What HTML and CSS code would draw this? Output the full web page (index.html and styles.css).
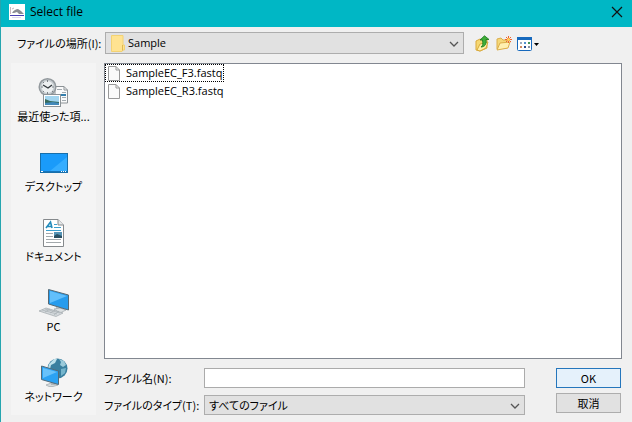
FILE: index.html
```html
<!DOCTYPE html>
<html lang="ja">
<head>
  <meta charset="utf-8">
  <title>Select file</title>
  <link rel="stylesheet" href="styles.css">
</head>
<body>
  <div class="dialog">
    <header class="titlebar">
      <svg class="app-icon" width="16" height="16" viewBox="0 0 16 16">
        <rect width="16" height="16" fill="#fff"/>
        <path d="M3 9C5 6 7 5 9 5L12 7L15 10H10L8 8L5 9Z" fill="#8b8d94"/>
        <path d="M1.500 3V10M3 5L5 4" stroke="#c9b6bd" fill="none"/>
        <path d="M1 11.500H15" stroke="#4a3fb4"/>
        <path d="M3 13.500H12" stroke="#dcdaf0"/>
      </svg>
      <h1>Select file</h1>
      <button class="close" type="button" aria-label="Close">
        <svg width="12" height="12" viewBox="0 0 12 12"><path d="M1 1L11 11M11 1L1 11" stroke="#111" stroke-width="1.200"/></svg>
      </button>
    </header>

    <form class="content">
      <div class="lookin">
        <label for="location">ファイルの場所(I):</label>
        <div class="select-box folder-box">
          <svg class="folder" width="14" height="17" viewBox="0 0 14 17">
            <path d="M0.500 0.500H12V10L13.500 10V15H12L11 16.500H0.500Z" fill="#ffe391" stroke="#f3d273"/>
            <path d="M11.500 10V15.500" stroke="#dfb951"/>
          </svg>
          <select id="location"><option>Sample</option></select>
          <svg class="arrow" width="10" height="6" viewBox="0 0 10 6"><path d="M1 1L5 5L9 1" fill="none" stroke="#555" stroke-width="1.300"/></svg>
        </div>
        <div class="tools">
          <button type="button" aria-label="Up one level">
            <svg width="16" height="17" viewBox="0 0 16 17">
              <path d="M1 6L5 4L7 5L12 4V13L5 16L1 15Z" fill="#f6d873" stroke="#d9a93c"/>
              <path d="M2 15L5 9L13 7L11 13L5 16Z" fill="#fff0a8" stroke="#d9a93c"/>
              <path d="M6 12C8 11 8 9 7.500 5H5L9.500 0.800L14 4.500H11C12 10 9 12 6 12Z" fill="#3fae3a" stroke="#187a1c" stroke-width=".8"/>
            </svg>
          </button>
          <button type="button" aria-label="New folder">
            <svg width="16" height="17" viewBox="0 0 16 17">
              <path d="M1 14V4L5 3L7 5H11V13Z" fill="#f5d879" stroke="#dcae4b"/>
              <path d="M1 15L4 8L14 7L12 13Z" fill="#fff0b0" stroke="#dcae4b"/>
              <path d="M12.500 1V8M9 4.500H16M10 2L15 7M15 2L10 7" stroke="#f0642f"/>
              <circle cx="12.500" cy="4.500" r="1.500" fill="#ffd65a"/>
            </svg>
          </button>
          <button type="button" aria-label="View menu">
            <svg width="23" height="17" viewBox="0 0 23 17">
              <rect x="0.500" y="2.500" width="14" height="13" rx="1" fill="#fff" stroke="#1769bd"/>
              <path d="M0 2H15V5H0Z" fill="#1769bd"/>
              <path d="M3 7H5V9H3Z" fill="#9babc0"/><path d="M7 7H9V9H7Z" fill="#5391d1"/><path d="M11 7H13V9H11Z" fill="#439557"/>
              <path d="M3 11H5V13H3Z" fill="#d28a62"/><path d="M7 11H9V13H7Z" fill="#294b8d"/><path d="M11 11H13V13H11Z" fill="#8d92a1"/>
              <path d="M17 8H22L19.500 11Z" fill="#000"/>
            </svg>
          </button>
        </div>
      </div>

      <nav class="places">
        <button type="button">
          <svg width="32" height="32" viewBox="0 0 32 32">
            <path d="M17 11.500H26L29.500 15V28H17Z" fill="#fafafa" stroke="#8c9296"/>
            <path d="M26 11.500V15H29.500" fill="none" stroke="#8c9296"/>
            <path d="M19 14.500H24M24 17.500H28M24 22.500H28M24 25.500H28" stroke="#a3abb0"/>
            <path d="M23 19H28V21H23Z" fill="#347fad"/>
            <circle cx="9.500" cy="12" r="8.300" fill="#c5cbcf" stroke="#93999d" stroke-width="1.500"/>
            <circle cx="9.500" cy="12" r="6" fill="#edf0f1"/>
            <path d="M9.500 5V7M9.500 17V19M3 12H5M14 12H16M5 7L6 8M14 16L15 17M5 17L6 16" stroke="#7c8388"/>
            <path d="M5 10L10 13L14 10" fill="none" stroke="#33393d" stroke-width="1.400"/>
            <rect x="5.500" y="19.500" width="17" height="12" fill="#fff" stroke="#8c9296"/>
            <path d="M7 21H21V30H7Z" fill="#a3d5ef"/>
            <path d="M7 24L12 26L21 27V29H7Z" fill="#376b5c"/>
            <path d="M7 28L15 27L21 28V30H7Z" fill="#4389ba"/>
          </svg>
          <span>最近使った項...</span>
        </button>
        <button type="button">
          <svg width="32" height="32" viewBox="0 0 32 32">
            <rect x="2.500" y="8.500" width="27" height="19" fill="#1a9bfa" stroke="#176fab"/>
            <path d="M12 26L29 12V26Z" fill="#35adff"/>
            <path d="M3 26.500H29" stroke="#1675bb"/>
            <path d="M3 26.500H5M23 26.500H24M25 26.500H26M27 26.500H28" stroke="#fff"/>
          </svg>
          <span>デスクトップ</span>
        </button>
        <button type="button">
          <svg width="32" height="32" viewBox="0 0 32 32">
            <path d="M5.500 4.500H20L25.500 10V31.500H5.500Z" fill="#fff" stroke="#85898c"/>
            <path d="M20 4.500V10H25.500" fill="#e5e8e9" stroke="#85898c"/>
            <path d="M8 13L12.500 7L14 13M9.500 11.500H14" fill="none" stroke="#238bbb" stroke-width="1.600"/>
            <path d="M16 9.500H19M16 12.500H23M8 15.500H23" stroke="#3b9fce"/>
            <path d="M8 18.500H15M8 21.500H15M8 24.500H23M8 27.500H23" stroke="#a3a9ac"/>
            <path d="M16 17H24V23H16Z" fill="#5493b5"/><path d="M16 21L19 19L24 21V23H16Z" fill="#294f62"/>
          </svg>
          <span>ドキュメント</span>
        </button>
        <button type="button">
          <svg width="32" height="32" viewBox="0 0 32 32">
            <path d="M18 22L24 23V26L18 24Z" fill="#b8bec1"/>
            <path d="M16 24L22 23L28 25L22 28Z" fill="#dce0e2" stroke="#9ea6aa" stroke-width=".7"/>
            <path d="M10.500 4.500L30.500 10V25L10.500 19Z" fill="#279ced" stroke="#576872"/>
            <path d="M12 6L29 11L12 18Z" fill="#62bffb"/>
            <path d="M1 26L8 23L25 28L18 31.500Z" fill="#d5dadd" stroke="#a1a8ac" stroke-width=".7"/>
            <path d="M4 25L19 29M7 24L22 28M7 27L12 24M12 28L17 25M16 30L21 26" stroke="#a8afb3" stroke-width=".7"/>
          </svg>
          <span>PC</span>
        </button>
        <button type="button">
          <svg width="32" height="32" viewBox="0 0 32 32">
            <circle cx="19.500" cy="13.500" r="10" fill="#397f9f"/>
            <path d="M11 9L16 4L19 4L17 8L13 10L12 14L10 13Z" fill="#bde1eb"/>
            <path d="M21 4L26 6L28 10L25 12L22 10L23 7Z" fill="#9acada"/>
            <path d="M23 14L28 13L27 18L23 21Z" fill="#75b5cc"/>
            <path d="M8 30L13 28L20 30L15 31.500H11Z" fill="#d5dadd" stroke="#9fa7ab" stroke-width=".7"/>
            <path d="M13 26L17 27V30H13Z" fill="#aeb7bc"/>
            <path d="M3.500 11L20.500 16V29.500L3.500 24.500Z" fill="#2ba2f3" stroke="#526b79"/>
            <path d="M5 13L19 17L5 23Z" fill="#68c2fa"/>
          </svg>
          <span>ネットワーク</span>
        </button>
      </nav>

      <ul class="files">
        <li class="focused">
          <svg width="14" height="17" viewBox="0 0 14 17"><path d="M1.500 1.500H9L12.500 5V15.500H1.500Z" fill="#fafafa" stroke="#999"/><path d="M9 1.500V5H12.500" fill="none" stroke="#999"/></svg>
          <span>SampleEC_F3.fastq</span>
        </li>
        <li>
          <svg width="14" height="17" viewBox="0 0 14 17"><path d="M1.500 1.500H9L12.500 5V15.500H1.500Z" fill="#fafafa" stroke="#999"/><path d="M9 1.500V5H12.500" fill="none" stroke="#999"/></svg>
          <span>SampleEC_R3.fastq</span>
        </li>
      </ul>

      <div class="bottom">
        <div class="fields">
          <label for="filename">ファイル名(N):</label>
          <input id="filename" type="text">
          <label for="filetype">ファイルのタイプ(T):</label>
          <div class="select-box">
            <select id="filetype"><option>すべてのファイル</option></select>
            <svg class="arrow" width="10" height="6" viewBox="0 0 10 6"><path d="M1 1L5 5L9 1" fill="none" stroke="#555" stroke-width="1.300"/></svg>
          </div>
        </div>
        <div class="actions">
          <button class="ok" type="submit">OK</button>
          <button type="button">取消</button>
        </div>
      </div>
    </form>
  </div>
</body>
</html>
```

FILE: styles.css
```css
* {
  box-sizing: border-box;
}
body {
  margin: 0;
  background: #f0f0f0;
  color: #000;
  font: 11px/16px "Noto Sans CJK JP", sans-serif;
  font-feature-settings: "palt";
}
button, input, select {
  margin: 0;
  font: inherit;
  font-feature-settings: inherit;
  color: inherit;
}
svg {
  display: block;
  flex: none;
}
.dialog {
  display: flex;
  flex-direction: column;
  min-height: 100vh;
  border-left: 1px solid #25a5af;
}
.titlebar {
  display: flex;
  align-items: center;
  height: 27px;
  padding: 0 8px;
  padding-bottom: 4px;
  background: #00b7c5;
}
.titlebar h1 {
  flex: 1;
  margin: 0 0 0 5px;
  font: 12px/16px "Open Sans", sans-serif;
}
.close {
  padding: 1px;
  border: 0;
  background: none;
}
.content {
  flex: 1;
  display: grid;
  grid-template-columns: 85px 1fr;
  grid-template-rows: 22px 1fr auto;
  column-gap: 8px;
  row-gap: 9px;
  padding: 5px 11px 7px 10px;
}
.lookin {
  grid-column: 1 / 3;
  display: flex;
  align-items: center;
}
.lookin label {
  width: 94px;
  padding-left: 6px;
  white-space: nowrap;
}
.select-box {
  position: relative;
  height: 20px;
}
.select-box select {
  appearance: none;
  display: block;
  width: 100%;
  height: 100%;
  padding: 0 20px 0 4px;
  border: 1px solid #adadad;
  border-radius: 0;
  background: #e1e1e1;
}
.folder-box {
  flex: 1;
  height: 22px;
}
.folder-box select {
  padding-left: 22px;
  font: 11px/16px "Open Sans", sans-serif;
}
.folder {
  position: absolute;
  left: 6px;
  top: 3px;
}
.arrow {
  position: absolute;
  right: 5px;
  top: 50%;
  margin-top: -2px;
  pointer-events: none;
}
.tools {
  display: flex;
  gap: 5px;
  width: 157px;
  padding-left: 11px;
}
.tools button {
  padding: 0;
  border: 0;
  background: none;
}
.places {
  grid-row: 2 / 4;
  display: flex;
  flex-direction: column;
  gap: 21px;
  padding-top: 12px;
  background: #f4f4f4;
}
.places button {
  display: flex;
  flex-direction: column;
  align-items: center;
  gap: 1px;
  padding: 0;
  border: 0;
  background: none;
  white-space: nowrap;
}
.files {
  margin: 0 -1px 0 0;
  padding: 0;
  border: 1px solid #828790;
  background: #fff;
  list-style: none;
}
.files li {
  display: flex;
  align-items: center;
  gap: 5px;
  width: max-content;
  height: 18px;
  padding: 0 1px;
  border: 1px solid transparent;
  font: 11px/16px "Open Sans", sans-serif;
}
.files .focused {
  border: 1px dotted #000;
}
.bottom {
  display: flex;
  align-items: flex-start;
  gap: 31px;
}
.fields {
  flex: 1;
  display: grid;
  grid-template-columns: 100px 1fr;
  align-items: center;
  row-gap: 7px;
}
.fields label {
  white-space: nowrap;
}
.fields input {
  width: 100%;
  height: 20px;
  padding: 0 4px;
  border: 1px solid #ababab;
  background: #fff;
}
.actions {
  display: grid;
  gap: 5px;
  width: 65px;
}
.actions button {
  height: 20px;
  padding: 0;
  border: 1px solid #adadad;
  background: #e1e1e1;
}
.actions .ok {
  border-color: #2576bc;
  background: #e5f1fb;
}
```
